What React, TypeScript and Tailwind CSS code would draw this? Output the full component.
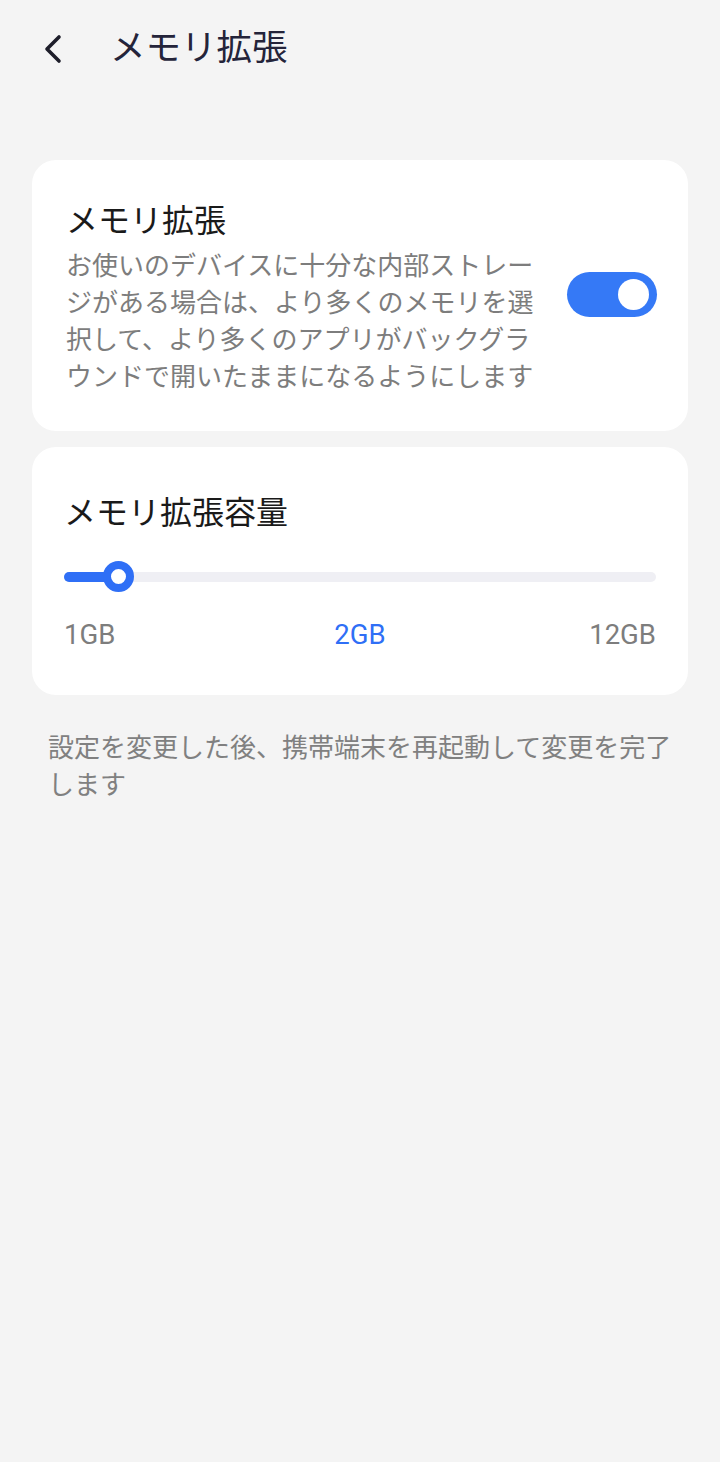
import React, { useState } from "react";

const font = { fontFamily: "Roboto, 'Noto Sans CJK JP', sans-serif" };

function Toggle({ on, onChange }: { on: boolean; onChange: () => void }) {
  return (
    <button
      onClick={onChange}
      className={`relative -mt-[6px] h-[45px] w-[90px] shrink-0 rounded-full ${on ? "bg-[#3579f6]" : "bg-[#d9d9de]"}`}
    >
      <span
        className={`absolute top-[7px] h-[31px] w-[31px] rounded-full bg-white ${on ? "right-[8px]" : "left-[8px]"}`}
      />
    </button>
  );
}

export default function App() {
  const [enabled, setEnabled] = useState(true);

  return (
    <div className="min-h-[1462px] w-full bg-[#f4f4f4]" style={font}>
      {/* header */}
      <div className="flex h-[96px] items-center pl-[40px] pt-[2px]">
        <svg width="28" height="34" viewBox="0 0 28 34" className="text-[#1e1e2a]">
          <path d="M19 5 L7 17 L19 29" fill="none" stroke="currentColor" strokeWidth="3.6" strokeLinecap="round" strokeLinejoin="round" />
        </svg>
        <h1 className="ml-[42px] text-[35.5px] leading-none text-[#24243a]">メモリ拡張</h1>
      </div>

      <div className="mt-[64px] flex flex-col gap-[16px] px-[32px]">
        {/* toggle card */}
        <div className="flex items-center justify-between rounded-[24px] bg-white pl-[34px] pr-[31px] pt-[39px] pb-[35px]">
          <div className="w-[470px]">
            <div className="text-[32px] leading-[44px] text-[#1a1a1a]">メモリ拡張</div>
            <p className="mt-[5px] text-[26px] leading-[37px] text-[#7d7d7d]">
              お使いのデバイスに十分な内部ストレージがある場合は、より多くのメモリを選択して、より多くのアプリがバックグラウンドで開いたままになるようにします
            </p>
          </div>
          <Toggle on={enabled} onChange={() => setEnabled(!enabled)} />
        </div>

        {/* slider card */}
        <div className="rounded-[24px] bg-white px-[32px] pt-[44px] pb-[42px]">
          <div className="text-[32px] leading-[44px] text-[#1a1a1a]">メモリ拡張容量</div>
          <div className="relative mt-[26px] h-[32px]">
            <div className="absolute left-0 right-0 top-[11px] h-[10px] rounded-full bg-[#efeff4]" />
            <div className="absolute left-0 top-[11px] h-[10px] w-[56px] rounded-full bg-[#2f6ff6]" />
            <div className="absolute left-[39px] top-0 h-[31px] w-[31px] rounded-full border-[8px] border-[#2f6ff6] bg-white" />
          </div>
          <div className="mt-[24px] grid grid-cols-3 text-[27.5px] leading-[36px] text-[#7d7d7d]">
            <span className="text-left">1GB</span>
            <span className="text-center text-[#2f6ff6]">2GB</span>
            <span className="text-right">12GB</span>
          </div>
        </div>
      </div>

      <p className="mt-[35px] pl-[48px] pr-[40px] text-[26px] leading-[37px] text-[#808080]">
        設定を変更した後、携帯端末を再起動して変更を完了します
      </p>
    </div>
  );
}
